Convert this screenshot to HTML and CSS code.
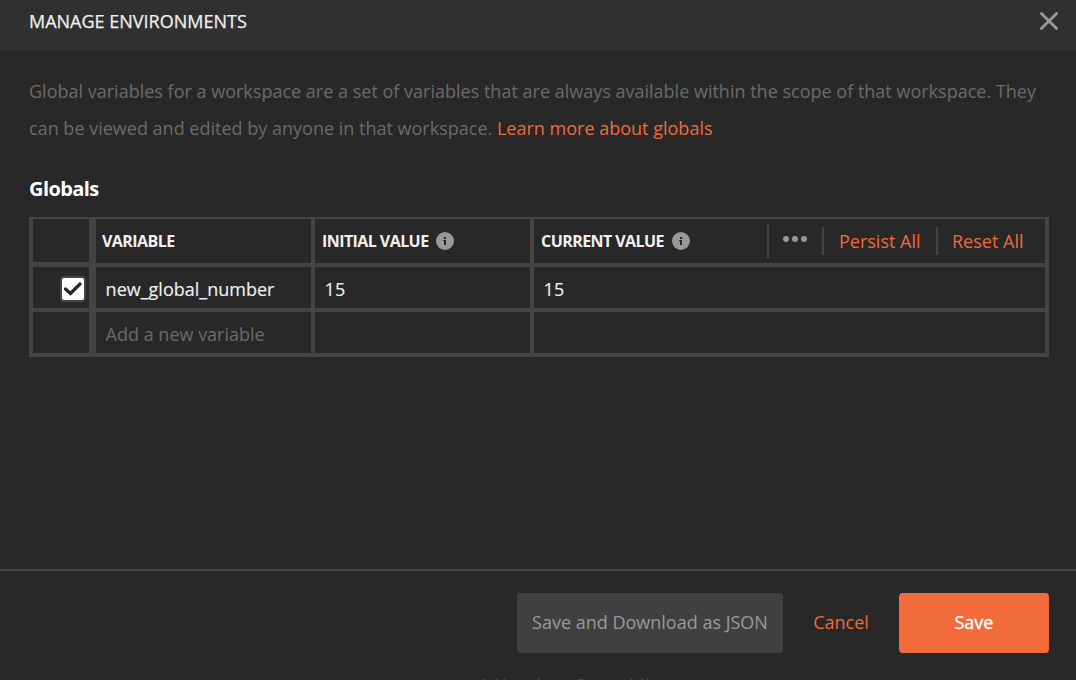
FILE: index.html
```html
<!DOCTYPE html>
<html lang="en">
<head>
<meta charset="utf-8">
<title>Manage Environments</title>
<link rel="stylesheet" href="styles.css">
</head>
<body>
<div class="modal">
  <header class="header">
    <h1 class="title">MANAGE ENVIRONMENTS</h1>
    <svg class="close" width="18" height="18" viewBox="0 0 18 18"><path d="M1.4 1.4L16.6 16.6M16.6 1.4L1.4 16.6"/></svg>
  </header>
  <main class="content">
    <p class="intro">Global variables for a workspace are a set of variables that are always available within the scope of that workspace. They<br>can be viewed and edited by anyone in that workspace. <a class="link">Learn more about globals</a></p>
    <h2 class="subtitle">Globals</h2>
    <div class="table">
      <div class="cell select head"></div>
      <div class="cell head variable">VARIABLE</div>
      <div class="cell head"><span class="label">INITIAL VALUE</span>
        <svg class="info" width="18" height="18" viewBox="0 0 18 18"><circle cx="9" cy="9" r="9"/><path d="M8 5h2v2H8zM7 8h3v5H8V9H7z"/></svg>
      </div>
      <div class="cell head"><span class="label">CURRENT VALUE</span>
        <svg class="info" width="18" height="18" viewBox="0 0 18 18"><circle cx="9" cy="9" r="9"/><path d="M8 5h2v2H8zM7 8h3v5H8V9H7z"/></svg>
        <div class="actions">
          <div class="more"><svg width="24" height="6" viewBox="0 0 24 6"><circle cx="3" cy="3" r="3"/><circle cx="12" cy="3" r="3"/><circle cx="21" cy="3" r="3"/></svg></div>
          <a class="action persist">Persist All</a>
          <a class="action reset">Reset All</a>
        </div>
      </div>
      <div class="cell select"><span class="checkbox"><svg width="20" height="16" viewBox="0 0 20 16"><path d="M2.5 8L7.5 12.5L17 3"/></svg></span></div>
      <div class="cell value">new_global_number</div>
      <div class="cell value">15</div>
      <div class="cell value">15</div>
      <div class="cell select"></div>
      <div class="cell value placeholder">Add a new variable</div>
      <div class="cell"></div>
      <div class="cell"></div>
    </div>
  </main>
  <footer class="footer">
    <button class="button secondary">Save and Download as JSON</button>
    <a class="cancel">Cancel</a>
    <button class="button primary">Save</button>
  </footer>
</div>
<div class="backdrop">! Number Consoldl</div>
</body>
</html>
```
FILE: styles.css
```css
* { box-sizing: border-box; }
body { margin: 0; width: 1076px; height: 680px; overflow: hidden; background: #282828; color: #f0f0f0; font: 18px/24px "Open Sans", sans-serif; }
.modal { height: 677px; display: flex; flex-direction: column; }
.header { height: 51px; flex: none; background: #303030; display: flex; justify-content: space-between; align-items: flex-start; padding: 9px 18px 0 29px; }
.title { margin: 0; font-size: 18px; line-height: 24px; font-weight: 400; -webkit-text-stroke: 0.25px #f0f0f0; }
.close { margin-top: 3px; fill: none; stroke: #999; stroke-width: 2.8; stroke-linecap: round; }
.content { flex: 1; padding: 22px 27px 0 29px; }
.intro { margin: 0; color: #6b6b6b; line-height: 37px; letter-spacing: 0.005px; white-space: nowrap; }
.link, .action, .cancel { color: #ef6a3b; }
.subtitle { margin: 28px 0 0; font-size: 20px; line-height: 28px; font-weight: 700; letter-spacing: -0.6px; color: #fff; }
.table { margin-top: 14px; height: 140px; display: grid; grid-template-columns: 59px 215px 215px 511px; grid-template-rows: 44px 41px 41px; gap: 4px; padding: 2px 4px 4px; background: #444; }
.cell { background: #282828; display: flex; align-items: center; }
.select { margin-right: 3px; justify-content: flex-end; padding: 2px 3px 0 0; }
.select.head { margin-bottom: 1px; }
.head { font-size: 16px; font-weight: 700; letter-spacing: -0.57px; padding-left: 7px; white-space: nowrap; }
.info { margin-left: 7.6px; fill: #999; }
.info path { fill: #282828; }
.actions { margin-left: auto; display: flex; align-items: center; font-size: 18px; font-weight: 400; letter-spacing: 0; }
.more { height: 34px; width: 55px; border-left: 2px solid #444; padding: 12px 0 0 14px; display: flex; align-items: flex-start; fill: #999; }
.action { height: 28px; line-height: 28px; border-left: 2px solid #444; padding-left: 14px; }
.persist { width: 114px; padding-left: 15px; }
.reset { width: 109px; }
.value { padding: 2px 0 0 9.6px; -webkit-text-stroke: 0.15px #f0f0f0; }
.variable { padding-left: 6px; }
.placeholder { color: #6b6b6b; -webkit-text-stroke: 0; }
.checkbox { width: 26px; height: 26px; flex: none; border: 2px solid #444; border-radius: 4px; background: #fff; display: flex; align-items: center; justify-content: center; }
.checkbox svg { fill: none; stroke: #282828; stroke-width: 3.3; stroke-linecap: round; flex: none; }
.footer { height: 108px; flex: none; border-top: 2px solid #444; display: flex; align-items: flex-start; justify-content: flex-end; padding: 22px 27px 0 0; }
.button { height: 60px; border: 0; border-radius: 4px; padding: 0 0 2px; font: inherit; white-space: nowrap; }
.secondary { width: 266px; background: #404040; color: #999; }
.cancel { width: 116px; line-height: 58px; text-align: center; }
.primary { width: 150px; background: #f26b3a; color: #fff; -webkit-text-stroke: 0.35px #fff; }
.backdrop { height: 3px; overflow: hidden; background: #2a2728; color: #4c4a4b; padding-left: 481px; line-height: 16px; letter-spacing: 0.5px; word-spacing: 2px; }
```
